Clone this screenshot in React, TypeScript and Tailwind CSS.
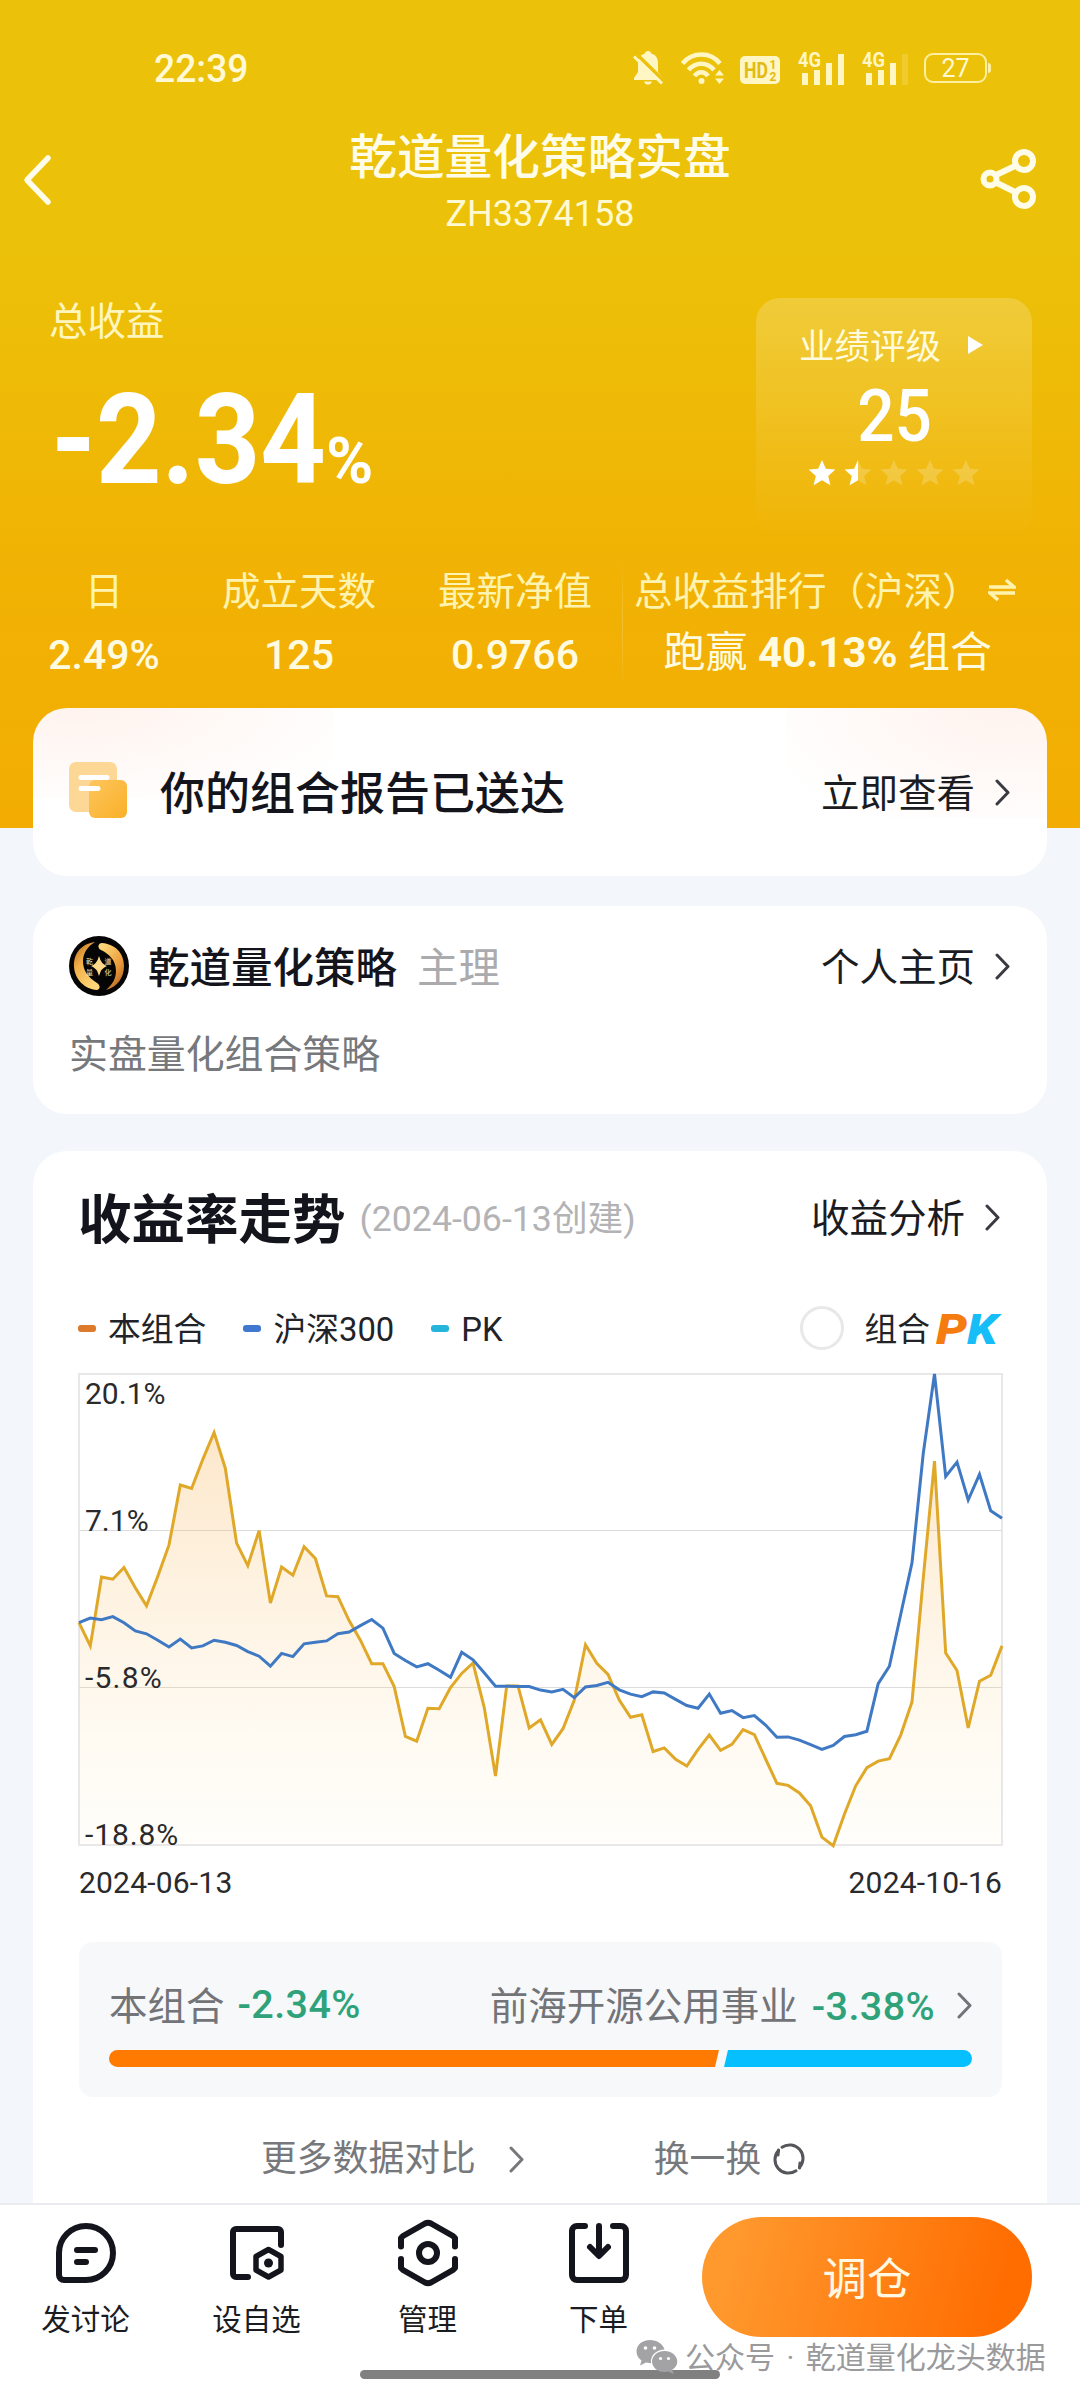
import type { ReactNode } from "react";
import clsx from "clsx";

const portfolio = [
  763, 828, 635, 641, 608, 665, 716, 633, 545, 377, 387, 305, 230, 330, 540,
  603, 505, 708, 607, 630, 550, 583, 688, 690, 757, 812, 878, 878, 942, 1082,
  1095, 1003, 1004, 945, 905, 876, 1000, 1193, 940, 940, 1058, 1035, 1104, 1060,
  980, 825, 877, 908, 980, 1028, 1021, 1124, 1114, 1146, 1165, 1118, 1078, 1121,
  1104, 1063, 1077, 1145, 1213, 1219, 1240, 1276, 1364, 1388, 1300, 1220, 1169,
  1151, 1144, 1078, 985, 640, 310, 848, 897, 1058, 927, 910, 828,
];

const hs300 = [
  763, 750, 755, 746, 763, 786, 794, 812, 831, 809, 834, 828, 812, 818, 827,
  844, 857, 885, 849, 858, 822, 818, 814, 794, 789, 771, 754, 778, 849, 869,
  887, 878, 896, 916, 846, 867, 903, 941, 941, 942, 942, 952, 957, 950, 973,
  943, 939, 930, 951, 963, 970, 957, 960, 978, 995, 1003, 963, 1017, 1009, 1029,
  1023, 1050, 1084, 1083, 1092, 1105, 1118, 1107, 1082, 1077, 1067, 934, 885,
  740, 595, 290, 66, 353, 313, 419, 347, 449, 470,
];

const chartWidth = 923;
const chartHeight = 471;

const toPoints = (series: number[]) =>
  series
    .map((v, i) => {
      const x = (i * chartWidth) / (series.length - 1);
      const y = ((v - 66) * chartHeight) / 1320;
      return `${x.toFixed(1)},${y.toFixed(1)}`;
    })
    .join(" ");

const Chevron = ({ className }: { className?: string }) => (
  <svg
    className={clsx("shrink-0", className)}
    width="15"
    height="27"
    viewBox="0 0 15 27"
    fill="none"
    stroke="currentColor"
    strokeWidth="3"
    strokeLinecap="round"
    strokeLinejoin="round"
  >
    <path d="M2 2l11 11.5L2 25" />
  </svg>
);

const Signal = ({ weak }: { weak?: boolean }) => (
  <svg
    className="overflow-visible"
    width="50"
    height="40"
    viewBox="0 -4 50 40"
    fill="#fff6c4"
  >
    <text
      x="0"
      y="15"
      fontSize="20"
      fontWeight="700"
      textLength="23"
      lengthAdjust="spacingAndGlyphs"
    >
      4G
    </text>
    <rect x="4" y="21" width="6" height="12" />
    <rect x="16" y="18" width="6" height="15" />
    <rect x="28" y="11" width="6" height="22" />
    <rect x="40" y="2" width="6" height="31" opacity={weak ? 0.2 : 1} />
  </svg>
);

const StatusBar = () => (
  <div className="flex h-[136px] items-center pl-[154px] text-[#fff9d6]">
    <span className="w-[477px] pt-px text-[38px] font-medium leading-[40px]">
      <span className="inline-block origin-left scale-x-[0.98]">22:39</span>
    </span>
    <svg width="34" height="36" viewBox="0 0 34 36" fill="#fff6c4">
      <path d="M17 1c2 0 3 1 3.200 2.600C25.500 5 27 9 27 14v8l5 6v2H3v-2l4-6v-8C7 9 9 5 13.800 3.600 14 2 15 1 17 1zM13 31.500h8c-.8 2.500-2.200 3-4 3s-3.200-.5-4-3z" />
      <path d="M4.500 3L33 31" stroke="#ecc109" strokeWidth="3.500" />
      <path d="M3 6.500L31 33.500" stroke="#fff6c4" strokeWidth="3" />
    </svg>
    <svg
      className="ml-[15px]"
      width="46"
      height="36"
      viewBox="0 0 46 36"
      fill="none"
      stroke="#fff6c4"
      strokeWidth="4.500"
    >
      <path d="M2.500 13.500c10-12 28-12 37.500 0" />
      <path d="M8.500 20c7-8.500 18.500-8.500 25.500 0" />
      <path d="M14.500 26c3.500-5 10-5 13.500 0" />
      <circle cx="21.500" cy="31" r="3" fill="#fff6c4" stroke="none" />
      <path
        d="M35 25.500l4.500-5.500 4.500 5.500zM35 28.500l4.500 5.500 4.500-5.500z"
        fill="#fff6c4"
        stroke="none"
      />
    </svg>
    <svg className="ml-[14px] mt-[3px]" width="40" height="28" viewBox="0 0 40 28">
      <rect width="40" height="28" rx="5" fill="#fff6c4" />
      <g fill="#e3ba12" fontWeight="700">
        <text x="4" y="22" fontSize="22" textLength="24" lengthAdjust="spacingAndGlyphs">
          HD
        </text>
        <text x="29.500" y="13" fontSize="12">
          1
        </text>
        <text x="29.500" y="25" fontSize="12">
          2
        </text>
      </g>
    </svg>
    <span className="ml-[18px]">
      <Signal />
    </span>
    <span className="ml-[14px]">
      <Signal weak />
    </span>
    <span className="ml-[12px] flex h-[30px] w-[63px] items-center justify-center rounded-[9px] border-[2.5px] border-[#fff0a0] text-[25px] leading-none">
      27
    </span>
    <span className="ml-px h-[10px] w-[3px] rounded-r bg-[#fff0a0]" />
  </div>
);

const TitleBar = () => (
  <div className="flex h-[118px] justify-between pl-[22px] pr-[42px] text-white">
    <svg
      className="mr-[20px] mt-[18px]"
      width="60"
      height="52"
      viewBox="0 0 60 52"
      fill="none"
    >
      <path
        d="M26 4L5 26l21 22"
        stroke="#fffde8"
        strokeWidth="5.500"
        strokeLinecap="round"
        strokeLinejoin="round"
      />
    </svg>
    <div className="flex flex-col items-center text-[#fffde8]">
      <h1 className="-mt-[6px] text-[47.700px] font-medium leading-[56px]">
        乾道量化策略实盘
      </h1>
      <p className="mt-[8px] text-[36px] leading-[40px] text-[#fffad2]">ZH3374158</p>
    </div>
    <svg
      className="mt-[12px]"
      width="60"
      height="62"
      viewBox="0 0 60 62"
      fill="none"
      stroke="#fffde8"
      strokeWidth="6"
    >
      <circle cx="46" cy="13" r="9" />
      <circle cx="12" cy="31" r="6.500" />
      <circle cx="46" cy="49" r="9" />
      <path d="M18 27l19-9M18 34.500l19 9.500" />
    </svg>
  </div>
);

const Star = ({ fill }: { fill: number }) => (
  <svg width="28" height="28" viewBox="0 0 24 24">
    <defs>
      <linearGradient id={`star-${fill}`}>
        <stop offset={fill} stopColor="#fff" />
        <stop offset={fill} stopColor="#fff" stopOpacity="0.2" />
      </linearGradient>
    </defs>
    <path
      fill={`url(#star-${fill})`}
      d="M12 .8l3.300 7.500 8.200.8-6.200 5.400 1.900 8L12 18.300l-7.200 4.200 1.900-8L.5 9.100l8.200-.8z"
    />
  </svg>
);

const Rating = () => (
  <div className="flex h-[240px] w-[276px] flex-col items-center rounded-[24px] bg-linear-to-b from-white/20 to-white/0 pt-[29px]">
    <div className="flex h-[40px] w-full items-center pl-[43px] text-[#fffbdc]">
      <span className="text-[35.5px] leading-[40px]">业绩评级</span>
      <svg className="-mt-1 ml-[27px]" width="15" height="20" viewBox="0 0 15 20" fill="#fff">
        <path d="M0 1l15 9-15 9z" />
      </svg>
    </div>
    <div className="mt-[13px] scale-x-90 text-[73px] font-medium leading-[72px] text-white">
      25
    </div>
    <div className="mt-[7px] flex gap-[8px]">
      {[1, 0.5, 0, 0, 0].map((fill, i) => (
        <Star key={i} fill={fill} />
      ))}
    </div>
  </div>
);

const Stat = ({
  label,
  value,
  className,
}: {
  label: string;
  value: string;
  className: string;
}) => (
  <div className={clsx("flex flex-col items-center", className)}>
    <span className="text-[38.5px] leading-[44px] text-[#fff3b0]">{label}</span>
    <span className="mt-[19px] text-[41px] font-medium leading-[44px] text-[#fffbe0]">
      {value}
    </span>
  </div>
);

const Header = () => (
  <header className="h-[828px] whitespace-nowrap bg-[linear-gradient(180deg,#ecc109_0%,#ecc109_30%,#f1b204_70%,#f3ad02_100%)]">
    <StatusBar />
    <TitleBar />
    <div className="flex justify-between pl-[49px] pr-[48px] pt-[44px]">
      <div>
        <p className="pt-[2px] text-[38.5px] leading-[44px] text-[#fff6be]">总收益</p>
        <div className="mt-[31px] flex items-baseline text-white">
          <span className="w-[280px] pl-[2px] text-[127px] font-bold leading-[130px]">
            <span className="inline-block origin-left scale-x-[0.9]">-2.34</span>
          </span>
          <span className="-ml-[3px] text-[64px] font-bold leading-none">
            <span className="inline-block origin-left">%</span>
          </span>
        </div>
      </div>
      <Rating />
    </div>
    <div className="mt-[22px] flex h-[130px] pt-[10px]">
      <Stat className="w-[208px]" label="日" value="2.49%" />
      <Stat className="w-[182px]" label="成立天数" value="125" />
      <Stat className="w-[232px] pl-[18px]" label="最新净值" value="0.9766" />
      <div className="-mt-[10px] h-[130px] w-px bg-linear-to-b from-white/0 via-white/20 to-white/0" />
      <div className="flex flex-col items-center pl-[11px]">
        <div className="flex items-center text-[#fff3b0]">
          <span className="text-[38.5px] leading-[44px]">总收益排行（沪深）</span>
          <svg className="-mt-1 ml-[7px]" width="28" height="24" viewBox="0 0 28 24" fill="none">
            <path
              d="M1 9h25l-8-7M27 15H2l8 7"
              stroke="#fff3b0"
              strokeWidth="3.500"
            />
          </svg>
        </div>
        <div className="mt-[17px] pl-[6px] text-[42px] leading-[44px] text-[#fffbe0]">
          跑赢 <b className="font-bold">40.13%</b> 组合
        </div>
      </div>
    </div>
  </header>
);

const Card = ({ className, children }: { className?: string; children: ReactNode }) => (
  <section className={clsx("mx-[33px] rounded-[34px] whitespace-nowrap", className)}>
    {children}
  </section>
);

const ReportCard = () => (
  <Card className="-mt-[120px] flex h-[168px] items-center justify-between bg-white bg-[radial-gradient(ellipse_at_15%_0%,#fff3ee,#ffffff_85%),radial-gradient(ellipse_at_85%_0%,#fff3ee,#ffffff_85%)] bg-[length:300px_90px,260px_110px] bg-[position:left_top,right_top] bg-no-repeat pl-[36px] pr-[37px]">
    <div className="flex items-center">
      <svg className="-mt-1" width="58" height="58" viewBox="0 0 58 58">
        <defs>
          <linearGradient id="sheet" x1="0" y1="0" x2="1" y2="1">
            <stop offset="0" stopColor="#fdc65d" />
            <stop offset="1" stopColor="#fab028" />
          </linearGradient>
        </defs>
        <rect x="0" y="1" width="48" height="50" rx="7" fill="#fdd796" />
        <rect x="20" y="19" width="38" height="38" rx="6" fill="url(#sheet)" />
        <path
          d="M12 16.500h26M12 27.500h17"
          stroke="#fff"
          strokeWidth="5"
          strokeLinecap="round"
        />
      </svg>
      <h2 className="ml-[33px] pt-[5px] text-[45px] font-medium leading-[50px] text-[#14151c]">
        你的组合报告已送达
      </h2>
    </div>
    <div className="flex items-center text-[38.5px] leading-[44px] text-[#1b1c22]">
      <span className="pt-[3px]">立即查看</span>
      <Chevron className="ml-[20px] text-[#3a3b42]" />
    </div>
  </Card>
);

const Avatar = () => (
  <svg width="60" height="60" viewBox="0 0 60 60">
    <defs>
      <linearGradient id="gold" x1="0" y1="0" x2="0.600" y2="1">
        <stop offset="0" stopColor="#b86a1c" />
        <stop offset="0.450" stopColor="#f2b04a" />
        <stop offset="1" stopColor="#ffd676" />
      </linearGradient>
      <linearGradient id="gold-flip" x1="1" y1="1" x2="0.300" y2="0">
        <stop offset="0" stopColor="#a3531a" />
        <stop offset="0.450" stopColor="#e99a3a" />
        <stop offset="1" stopColor="#ffd676" />
      </linearGradient>
    </defs>
    <circle cx="30" cy="30" r="30" fill="#050505" />
    <path
      d="M26 6C11 8 4 19 5 31c1 12 10 22 23 23 4-1 3-5 0-7C19 41 14 35 14 25c0-8 5-15 12-19z"
      fill="url(#gold)"
    />
    <path
      d="M33 7c13 1 22 10 22 23 0 12-7 21-18 24 7-6 10-12 10-19 0-11-7-17-15-21-4-2-3-7 1-7z"
      fill="url(#gold-flip)"
    />
    <path d="M30 20q2 8 8 10-6 2-8 10-2-8-8-10 6-2 8-10z" fill="#ffd98a" />
    <g fill="#f4e6b4" fontSize="7">
      <text x="17" y="28">乾</text>
      <text x="35.500" y="28">道</text>
      <text x="17" y="38.500">量</text>
      <text x="35.500" y="38.500">化</text>
    </g>
  </svg>
);

const CreatorCard = () => (
  <Card className="mt-[30px] h-[208px] bg-white pl-[36px] pr-[37px] pt-[30px]">
    <div className="flex h-[60px] items-center justify-between">
      <div className="flex items-center text-[41.5px] leading-[50px]">
        <Avatar />
        <span className="ml-[19px] pt-[5px] font-medium text-[#14151c]">
          乾道量化策略
        </span>
        <span className="ml-[20px] pt-[5px] text-[#ababae]">主理</span>
      </div>
      <div className="flex items-center text-[38.5px] leading-[44px] text-[#1b1c22]">
        <span className="pt-[4px]">个人主页</span>
        <Chevron className="ml-[20px] text-[#3a3b42]" />
      </div>
    </div>
    <p className="mt-[37px] text-[38.900px] leading-[44px] text-[#77787c]">
      实盘量化组合策略
    </p>
  </Card>
);

const LegendItem = ({ dash, label }: { dash: string; label: string }) => (
  <div className="flex items-center">
    <span className={clsx("mr-[12px] h-[7px] w-[18px] rounded-[3px]", dash)} />
    <span className="pt-[3px]">{label}</span>
  </div>
);

const Chart = () => (
  <div className="mt-[24px]">
    <svg
      className="block overflow-visible"
      width={chartWidth}
      height={chartHeight}
      viewBox={`0 0 ${chartWidth} ${chartHeight}`}
    >
      <defs>
        <linearGradient id="area" x1="0" y1="0" x2="0" y2="1">
          <stop offset="0" stopColor="#f8b45c" stopOpacity="0.320" />
          <stop offset="0.600" stopColor="#fbc56e" stopOpacity="0.130" />
          <stop offset="1" stopColor="#fde9a8" stopOpacity="0.060" />
        </linearGradient>
      </defs>
      <rect
        width={chartWidth}
        height={chartHeight}
        fill="none"
        stroke="#e8e8ea"
        strokeWidth="2"
      />
      <path d="M0 156.500h923M0 313.500h923" stroke="#dcdcdc" />
      <polygon
        points={`0,${chartHeight} ${toPoints(portfolio)} ${chartWidth},${chartHeight}`}
        fill="url(#area)"
      />
      <g fill="none" strokeWidth="3">
        <polyline points={toPoints(portfolio)} stroke="#e0a828" />
        <polyline points={toPoints(hs300)} stroke="#3f79c4" />
      </g>
      <g fill="#2a2a2c" fontSize="30">
        <text x="6" y="30">20.1%</text>
        <text x="6" y="157">7.1%</text>
        <text x="6" y="314" letterSpacing="1.200">-5.8%</text>
        <text x="6" y="471" letterSpacing="0.900">-18.8%</text>
      </g>
    </svg>
    <div className="mt-[18px] flex justify-between text-[30px] leading-[40px] tracking-[0.2px] text-[#2a2a2c]">
      <span>2024-06-13</span>
      <span>2024-10-16</span>
    </div>
  </div>
);

const Comparison = () => (
  <div className="mt-[39px] h-[155px] rounded-[14px] bg-[#f6f8fa] px-[30px] pt-[43px]">
    <div className="flex items-center justify-between text-[38.5px] leading-[44px] text-[#737478]">
      <div className="flex items-center">
        本组合
        <span className="-mt-[5px] ml-[13px] text-[39.5px] font-medium tracking-[0.4px] text-[#2fa27a]">
          -2.34%
        </span>
      </div>
      <div className="flex items-center">
        前海开源公用事业
        <span className="ml-[14px] text-[39.5px] font-medium tracking-[0.4px] text-[#2fa27a]">
          -3.38%
        </span>
        <Chevron className="-mt-[3px] ml-[22px]" />
      </div>
    </div>
    <div className="mt-[21px] flex h-[17px]">
      <div className="w-[610px] rounded-l-full bg-[#ff7a00] [clip-path:polygon(0_0,100%_0,calc(100%-4px)_100%,0_100%)]" />
      <div className="ml-[5px] flex-1 rounded-r-full bg-[#05bfff] [clip-path:polygon(4px_0,100%_0,100%_100%,0_100%)]" />
    </div>
  </div>
);

const TrendCard = () => (
  <Card className="mt-[37px] h-[1052px] rounded-b-none bg-white pl-[46px] pr-[45px] pt-[38px]">
    <div className="flex h-[60px] items-center justify-between pr-[2px]">
      <div className="flex items-center">
        <h2 className="-ml-px pt-[3px] text-[53.5px] font-bold leading-[60px] text-[#14151c]">
          收益率走势
        </h2>
        <span className="ml-[14px] text-[35.700px] leading-[44px] text-[#b3b3b6]">
          (2024-06-13创建)
        </span>
      </div>
      <div className="flex items-center text-[38.5px] leading-[44px] text-[#1b1c22]">
        收益分析
        <Chevron className="-mt-[3px] ml-[20px] text-[#3a3b42]" />
      </div>
    </div>
    <div className="mt-[57px] flex h-[44px] items-center justify-between text-[32.800px] leading-[44px] text-[#222328]">
      <div className="-ml-px flex gap-[37px]">
        <LegendItem dash="bg-[#dd7a2c]" label="本组合" />
        <LegendItem dash="bg-[#4078cf]" label="沪深300" />
        <LegendItem dash="bg-[#27b4dc]" label="PK" />
      </div>
      <div className="flex items-center">
        <span className="mr-[20px] size-[44px] rounded-full border-[3px] border-[#e8e8ea]" />
        <span className="pt-[3px]">组合</span>
        <span className="ml-[6px] w-[66px] text-[43px] font-black italic">
          <span className="inline-block origin-left scale-x-[1.14] pt-px">
            <span className="text-[#f57c10]">P</span>
            <span className="text-[#17bdf6]">K</span>
          </span>
        </span>
      </div>
    </div>
    <Chart />
    <Comparison />
    <div className="mt-[40px] flex h-[44px] items-center pl-[182px] text-[35.800px] leading-[44px] text-[#77787c]">
      更多数据对比
      <Chevron className="ml-[33px]" />
      <span className="ml-[130px] pt-[2px]">换一换</span>
      <svg
        className="ml-[11px]"
        width="34"
        height="34"
        viewBox="0 0 34 34"
        fill="none"
        stroke="#55565a"
        strokeWidth="3"
        strokeLinecap="round"
      >
        <path d="M10 5.200A13.500 13.500 0 0 1 27.500 25.500M24 28.800A13.500 13.500 0 0 1 6.500 8.500" />
        <path d="M6 13l.5-5M28 21l-.5 5" />
      </svg>
    </div>
  </Card>
);

const NavItem = ({ label, children }: { label: string; children: ReactNode }) => (
  <div className="flex w-[171px] flex-col items-center pt-[13px]">
    <svg
      width="70"
      height="70"
      viewBox="0 0 70 70"
      fill="none"
      stroke="#14151c"
      strokeWidth="6"
      strokeLinecap="round"
      strokeLinejoin="round"
    >
      {children}
    </svg>
    <span className="mt-[12px] text-[29.500px] leading-[40px] text-[#1b1c22]">
      {label}
    </span>
  </div>
);

const BottomBar = () => (
  <nav className="relative flex h-[197px] border-t-2 border-[#e9ebee] bg-white whitespace-nowrap">
    <NavItem label="发讨论">
      <path d="M35 8a27 27 0 0 1 0 54H13a5 5 0 0 1-5-5V35A27 27 0 0 1 35 8z" />
      <path d="M26 32h18M26 44h9" />
    </NavItem>
    <NavItem label="设自选">
      <path d="M59 27V14a3 3 0 0 0-3-3H14a3 3 0 0 0-3 3v42a3 3 0 0 0 3 3h12" />
      <path d="M46.500 31.500l12.500 7v13.500l-12.500 7-12.500-7V38.500z" strokeWidth="5.500" />
      <circle cx="46.500" cy="45" r="4.500" fill="#14151c" stroke="none" />
    </NavItem>
    <NavItem label="管理">
      <path d="M8 28.500V20l2-2L32 5.500q3-1.500 6 0L60 18l2 2v8.500M8 41v9l2 2L32 64.500q3 1.500 6 0L60 52l2-2v-9" />
      <circle cx="35" cy="35" r="9" />
    </NavItem>
    <NavItem label="下单">
      <path d="M21 8h-8a5 5 0 0 0-5 5v44a5 5 0 0 0 5 5h44a5 5 0 0 0 5-5V13a5 5 0 0 0-5-5h-8" />
      <path d="M35 8v28M26 29l9 9 9-9" />
    </NavItem>
    <button className="ml-[18px] mt-[12px] h-[120px] w-[330px] rounded-full bg-linear-[105deg,#ff992e_10%,#ff6c00_90%] pt-[6px] text-[44.500px] leading-none text-[#fff8e2]">
      调仓
    </button>
    <div className="absolute bottom-[21px] left-[360px] h-[9px] w-[360px] rounded-full bg-[#808080]" />
    <div className="absolute left-[636px] top-[130px] flex h-[44px] items-center text-[30px] text-[#9a9a9c] [word-spacing:4px]">
      <svg className="mr-[7px]" width="42" height="36" viewBox="0 0 42 36" fill="#a3a3a5">
        <path d="M14 1C6 1 .5 6 .5 12.500c0 4 2 7 5 9L4 26.500l6-3 5 .8C14 16 21 10.500 28.500 10.500 27 5 21 1 14 1z" />
        <path d="M28.500 12C21.500 12 16 16.800 16 22.500S21.500 33 28.500 33l4-.5 5 2.500-1.200-4.200c3-2 5-5 5-8.300C41.300 16.800 35.500 12 28.500 12z" />
        <g fill="#fff">
          <circle cx="9.500" cy="9" r="1.800" />
          <circle cx="18.500" cy="9" r="1.800" />
          <circle cx="24.500" cy="19.500" r="1.600" />
          <circle cx="32.500" cy="19.500" r="1.600" />
        </g>
      </svg>
      公众号 · 乾道量化龙头数据
    </div>
  </nav>
);

export default function App() {
  return (
    <div className="h-[2400px] w-[1080px] overflow-hidden bg-[#f3f6fa] font-[Roboto,'Noto_Sans_CJK_SC',sans-serif]">
      <Header />
      <ReportCard />
      <CreatorCard />
      <TrendCard />
      <BottomBar />
    </div>
  );
}
